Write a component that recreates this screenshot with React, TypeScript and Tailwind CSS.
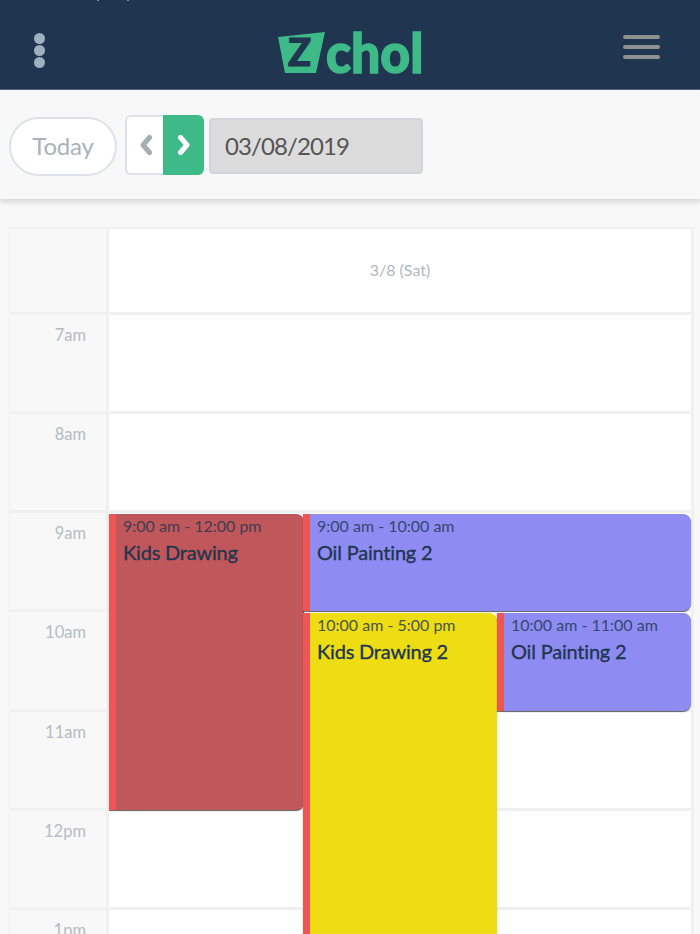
const hours = ["7am", "8am", "9am", "10am", "11am", "12pm", "1pm"];

type Ev = { time: string; title: string; pos: string; color: string };

const events: Ev[] = [
  { time: "9:00 am - 12:00 pm", title: "Kids Drawing", pos: "left-[109px] top-[315px] w-[195px] h-[296px]", color: "bg-[#c0585b]" },
  { time: "9:00 am - 10:00 am", title: "Oil Painting 2", pos: "left-[303px] top-[315px] w-[388px] h-[97px]", color: "bg-[#8e8cf2]" },
  { time: "10:00 am - 5:00 pm", title: "Kids Drawing 2", pos: "left-[303px] top-[414px] w-[194px] h-[340px]", color: "bg-[#eedd12]" },
  { time: "10:00 am - 11:00 am", title: "Oil Painting 2", pos: "left-[497px] top-[414px] w-[194px] h-[98px]", color: "bg-[#8e8cf2]" },
];

function Logo() {
  return (
    <div className="flex items-end w-[146px] h-[42px] ml-[34px] mt-[8px]">
      <div className="relative shrink-0 w-[47px] h-[41px]">
        <svg viewBox="0 0 47 41" className="w-[47px] h-[41px]">
          <polygon points="0,5 47,0 38,41 7,41" fill="#3dba88" />
        </svg>
        <span className="absolute left-[10px] top-[-5px] text-[38px] leading-[48px] font-black text-[#20354f] [-webkit-text-stroke:1px_#20354f]">Z</span>
      </div>
      <span className="text-[55px] leading-[42px] font-black text-[#3dba88] [-webkit-text-stroke:1.5px_#3dba88] ml-[1px] scale-x-[0.94] origin-left">chol</span>
    </div>
  );
}

export default function App() {
  return (
    <div className="relative w-[700px] h-[934px] overflow-hidden bg-[#f8f8f8] font-['Lato',sans-serif]">
      <span className="absolute left-[97px] top-0 w-[2px] h-[1px] bg-[#7f8c9c]"></span>
      <span className="absolute left-[127px] top-0 w-[2px] h-[1px] bg-[#7f8c9c]"></span>
      <header className="h-[90px] bg-[#20354f] border-b border-[#5a6b80] flex items-center justify-between pl-[34px] pr-[40px] pt-[6px]">
        <div className="flex flex-col gap-[1px] mt-[5px]">
          <span className="block w-[11px] h-[11px] rounded-full bg-[#a0afc0]"></span>
          <span className="block w-[11px] h-[11px] rounded-full bg-[#a0afc0]"></span>
          <span className="block w-[11px] h-[11px] rounded-full bg-[#a0afc0]"></span>
        </div>
        <Logo />
        <div className="flex flex-col gap-[6px] mt-[-2px]">
          <span className="block w-[37px] h-[4px] rounded-sm bg-[#8f9090]"></span>
          <span className="block w-[37px] h-[4px] rounded-sm bg-[#8f9090]"></span>
          <span className="block w-[37px] h-[4px] rounded-sm bg-[#8f9090]"></span>
        </div>
      </header>

      <div className="h-[109px] bg-[#f8f8f8] shadow-[0_3px_5px_rgba(0,0,0,0.14)] flex items-center pl-[9px]">
        <button className="w-[108px] h-[59px] rounded-full bg-white border-2 border-[#dde2e9] text-[24px] tracking-[-0.2px] text-[#a9b2b9] mt-[3px]">Today</button>
        <div className="flex ml-[8px] h-[60px]">
          <button className="w-[38px] rounded-l-[6px] bg-white border-2 border-r-0 border-[#dde2e9] flex items-center justify-center pl-[2px]">
            <svg width="14" height="22" viewBox="0 0 14 22"><path d="M10.5 3.5 L4 11 L10.5 18.5" fill="none" stroke="#a3afb8" strokeWidth="5" strokeLinecap="round" strokeLinejoin="round" /></svg>
          </button>
          <button className="w-[41px] rounded-r-[6px] bg-[#3dba88] flex items-center justify-center">
            <svg width="14" height="22" viewBox="0 0 14 22"><path d="M3.5 3.5 L10 11 L3.5 18.5" fill="none" stroke="#ffffff" strokeWidth="5" strokeLinecap="round" strokeLinejoin="round" /></svg>
          </button>
        </div>
        <div className="ml-[5px] w-[214px] h-[56px] mt-[3px] rounded-[4px] bg-[#dcdcdc] border-2 border-[#d2d6dc] flex items-center pl-[14px] text-[24px] tracking-[-0.9px] text-[#555555]">03/08/2019</div>
      </div>

      <div className="relative pt-[28px] pl-[9px]">
        <div className="w-[685px] border-t-[2px] border-l-[1px] border-r-[3px] border-[#f0f0f0]">
          <div className="flex h-[86px] border-b-[3px] border-[#f0f0f0]">
            <div className="w-[99px] border-r-[3px] border-[#f0f0f0] bg-[#f8f8f8]"></div>
            <div className="flex-1 bg-white flex items-center justify-center text-[16px] text-[#b0b8be] pb-[2px]">3/8 (Sat)</div>
          </div>
          {hours.map((h) => (
            <div key={h} className="flex h-[99.15px] border-b-[3px] border-[#f0f0f0]">
              <div className="w-[99px] border-r-[3px] border-[#f0f0f0] bg-[#f8f8f8] text-right pr-[20px] pt-[10px] text-[16.5px] leading-[20px] text-[#b4bcc3]">{h}</div>
              <div className="flex-1 bg-white"></div>
            </div>
          ))}
        </div>

        {events.map((e) => (
          <div
            key={e.time}
            className={`absolute ${e.pos} ${e.color} rounded-r-[8px] border-l-[7px] border-[#ee5555] shadow-[0_1px_1px_rgba(0,0,0,0.6)] pl-[7px] pt-[2px] text-[#20354f]`}
          >
            <div className="text-[16px] leading-[20px] opacity-80">{e.time}</div>
            <div className="text-[20px] leading-[26px] tracking-[-0.2px] [-webkit-text-stroke:0.3px] mt-[3px]">{e.title}</div>
          </div>
        ))}
      </div>
    </div>
  );
}
